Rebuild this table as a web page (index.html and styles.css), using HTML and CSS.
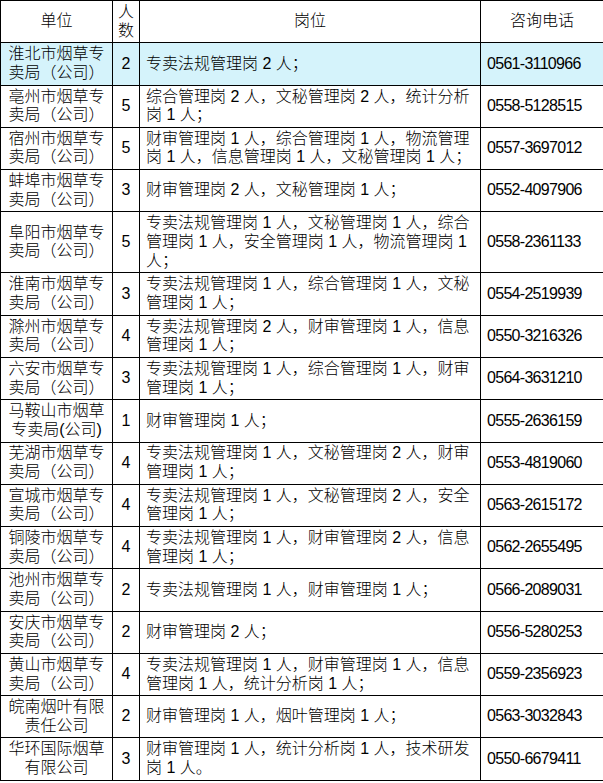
FILE: index.html
```html
<!DOCTYPE html>
<html lang="zh-CN">
<head>
<meta charset="utf-8">
<title>招聘岗位</title>
<link rel="stylesheet" href="styles.css">
</head>
<body>
<table class="jobs">
  <colgroup>
    <col class="c-unit">
    <col class="c-num">
    <col class="c-post">
    <col class="c-tel">
  </colgroup>
  <thead>
    <tr>
      <th>单位</th>
      <th class="num">人数</th>
      <th>岗位</th>
      <th>咨询电话</th>
    </tr>
  </thead>
  <tbody>
    <tr class="hl"><td class="unit">淮北市烟草专卖局（公司）</td><td class="num">2</td><td class="post">专卖法规管理岗 2 人；</td><td class="tel">0561-3110966</td></tr>
    <tr><td class="unit">亳州市烟草专卖局（公司）</td><td class="num">5</td><td class="post">综合管理岗 2 人，文秘管理岗 2 人，统计分析岗 1 人；</td><td class="tel">0558-5128515</td></tr>
    <tr><td class="unit">宿州市烟草专卖局（公司）</td><td class="num">5</td><td class="post">财审管理岗 1 人，综合管理岗 1 人，物流管理岗 1 人，信息管理岗 1 人，文秘管理岗 1 人；</td><td class="tel">0557-3697012</td></tr>
    <tr><td class="unit">蚌埠市烟草专卖局（公司）</td><td class="num">3</td><td class="post">财审管理岗 2 人，文秘管理岗 1 人；</td><td class="tel">0552-4097906</td></tr>
    <tr><td class="unit">阜阳市烟草专卖局（公司）</td><td class="num">5</td><td class="post">专卖法规管理岗 1 人，文秘管理岗 1 人，综合管理岗 1 人，安全管理岗 1 人，物流管理岗 1 人；</td><td class="tel">0558-2361133</td></tr>
    <tr><td class="unit">淮南市烟草专卖局（公司）</td><td class="num">3</td><td class="post">专卖法规管理岗 1 人，综合管理岗 1 人，文秘管理岗 1 人；</td><td class="tel">0554-2519939</td></tr>
    <tr><td class="unit">滁州市烟草专卖局（公司）</td><td class="num">4</td><td class="post">专卖法规管理岗 2 人，财审管理岗 1 人，信息管理岗 1 人；</td><td class="tel">0550-3216326</td></tr>
    <tr><td class="unit">六安市烟草专卖局（公司）</td><td class="num">3</td><td class="post">专卖法规管理岗 1 人，综合管理岗 1 人，财审管理岗 1 人；</td><td class="tel">0564-3631210</td></tr>
    <tr><td class="unit">马鞍山市烟草专卖局(公司)</td><td class="num">1</td><td class="post">财审管理岗 1 人；</td><td class="tel">0555-2636159</td></tr>
    <tr><td class="unit">芜湖市烟草专卖局（公司）</td><td class="num">4</td><td class="post">专卖法规管理岗 1 人，文秘管理岗 2 人，财审管理岗 1 人；</td><td class="tel">0553-4819060</td></tr>
    <tr><td class="unit">宣城市烟草专卖局（公司）</td><td class="num">4</td><td class="post">专卖法规管理岗 1 人，文秘管理岗 2 人，安全管理岗 1 人；</td><td class="tel">0563-2615172</td></tr>
    <tr><td class="unit">铜陵市烟草专卖局（公司）</td><td class="num">4</td><td class="post">专卖法规管理岗 1 人，财审管理岗 2 人，信息管理岗 1 人；</td><td class="tel">0562-2655495</td></tr>
    <tr><td class="unit">池州市烟草专卖局（公司）</td><td class="num">2</td><td class="post">专卖法规管理岗 1 人，财审管理岗 1 人；</td><td class="tel">0566-2089031</td></tr>
    <tr><td class="unit">安庆市烟草专卖局（公司）</td><td class="num">2</td><td class="post">财审管理岗 2 人；</td><td class="tel">0556-5280253</td></tr>
    <tr><td class="unit">黄山市烟草专卖局（公司）</td><td class="num">4</td><td class="post">专卖法规管理岗 1 人，财审管理岗 1 人，信息管理岗 1 人，统计分析岗 1 人；</td><td class="tel">0559-2356923</td></tr>
    <tr><td class="unit">皖南烟叶有限责任公司</td><td class="num">2</td><td class="post">财审管理岗 1 人，烟叶管理岗 1 人；</td><td class="tel">0563-3032843</td></tr>
    <tr><td class="unit">华环国际烟草有限公司</td><td class="num">3</td><td class="post">财审管理岗 1 人，统计分析岗 1 人，技术研发岗 1 人。</td><td class="tel">0550-6679411</td></tr>
  </tbody>
</table>
</body>
</html>
```

FILE: styles.css
```css
html, body {
  margin: 0;
  padding: 0;
  background: #ffffff;
}

.jobs {
  width: 603px;
  table-layout: fixed;
  border-collapse: collapse;
  font-family: "Liberation Sans", "Noto Sans CJK SC", sans-serif;
  font-size: 16px;
  line-height: 18.7px;
  color: #000000;
}

.c-unit { width: 112px; }
.c-num  { width: 27px; }
.c-post { width: 341px; }
.c-tel  { width: 123px; }

.jobs th,
.jobs td {
  border: 1px solid #000000;
  padding: 1.95px 4px;
  vertical-align: middle;
  font-weight: 300;
}

.jobs th {
  text-align: center;
}

.jobs .num {
  padding-left: 2px;
  padding-right: 2px;
  text-align: center;
}

.jobs .unit {
  text-align: center;
}

.jobs .post {
  text-align: left;
  padding-left: 6px;
}

.jobs .tel {
  text-align: left;
  padding-left: 6px;
  letter-spacing: -0.7px;
}

.jobs .hl td {
  background: #d5f3fb;
}
```
